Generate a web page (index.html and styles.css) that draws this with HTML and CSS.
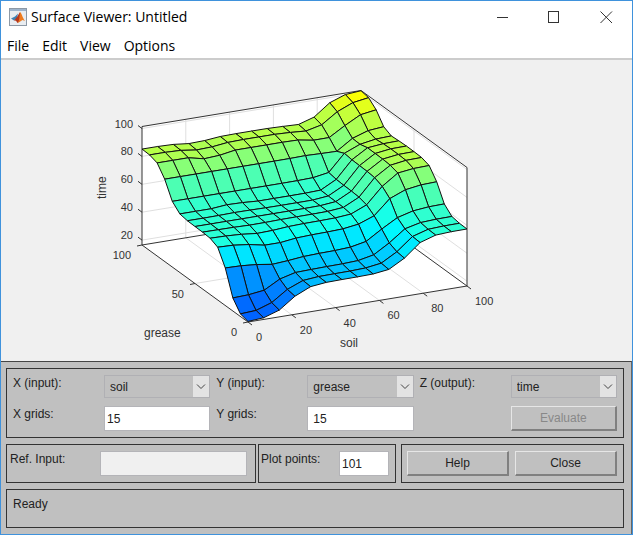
FILE: index.html
```html
<!DOCTYPE html>
<html lang="en">
  <head>
    <meta charset="UTF-8" />
    <meta name="viewport" content="width=device-width, initial-scale=1.0" />
    <title>Surface Viewer: Untitled</title>
    <link rel="stylesheet" href="styles.css">
  </head>
  <body>
    <div class="window">
      <header class="titlebar">
        <svg class="logo" width="18" height="18" viewBox="0 0 18 18">
          <rect x="0.5" y="0.5" width="17" height="17" fill="#e9edf1" stroke="#8d99a6" />
          <rect x="1" y="1" width="16" height="2" fill="#9db4cc" />
          <path d="M2 10.5 L6 8.5 L9 5.5 L8 10 L5 12.5 Z" fill="#3e82b5" />
          <path d="M5 12.5 L8 9 L11 4 L11.5 12 L8.5 15 L7 12.8 Z" fill="#b5371c" />
          <path d="M11 4 C12.5 5 13.5 9.5 16 13 L13.5 12 L9 15 C10.5 12 10.5 8 11 4 Z" fill="#ee7b1f" />
        </svg>
        <h1>Surface Viewer: Untitled</h1>
        <div class="window-buttons">
          <button type="button" aria-label="Minimize">
            <svg width="13" height="13" viewBox="0 0 13 13"><path d="M1 6.5 H12" /></svg>
          </button>
          <button type="button" aria-label="Maximize">
            <svg width="13" height="13" viewBox="0 0 13 13"><rect x="0.5" y="0.5" width="10" height="11" /></svg>
          </button>
          <button type="button" aria-label="Close window">
            <svg width="13" height="13" viewBox="0 0 13 13"><path d="M0.5 0.5 L12 12 M12 0.5 L0.5 12" /></svg>
          </button>
        </div>
      </header>

      <nav class="menubar">
        <a href="#">File</a>
        <a href="#">Edit</a>
        <a href="#">View</a>
        <a href="#">Options</a>
      </nav>

      <main class="plot">
        <svg id="surface" viewBox="1 60 631 301" role="img" aria-label="time as a function of soil and grease"></svg>
      </main>

      <form class="controls">
        <div class="panel axes">
          <label for="xInput">X (input):</label>
          <span class="dropdown">
            <select id="xInput"><option>soil</option><option>grease</option></select>
            <svg width="16" height="20" viewBox="0 0 16 20"><path d="M4 8 L8 12 L12 8" /></svg>
          </span>
          <label for="yInput">Y (input):</label>
          <span class="dropdown">
            <select id="yInput"><option>grease</option><option>soil</option></select>
            <svg width="16" height="20" viewBox="0 0 16 20"><path d="M4 8 L8 12 L12 8" /></svg>
          </span>
          <label for="zOutput">Z (output):</label>
          <span class="dropdown">
            <select id="zOutput"><option>time</option></select>
            <svg width="16" height="20" viewBox="0 0 16 20"><path d="M4 8 L8 12 L12 8" /></svg>
          </span>

          <label for="xGrids">X grids:</label>
          <input type="text" id="xGrids" value="15" />
          <label for="yGrids">Y grids:</label>
          <input type="text" id="yGrids" class="indent" value="15" />
          <button type="button" class="evaluate" disabled>Evaluate</button>
        </div>

        <div class="row">
          <div class="panel ref">
            <label for="refInput">Ref. Input:</label>
            <input type="text" id="refInput" disabled />
          </div>
          <div class="panel points">
            <label for="plotPoints">Plot points:</label>
            <input type="text" id="plotPoints" value="101" />
          </div>
          <div class="panel actions">
            <button type="button">Help</button>
            <button type="button">Close</button>
          </div>
        </div>

        <div class="panel status">Ready</div>
      </form>
    </div>
    <script src="surface.js"></script>
  </body>
</html>
```

FILE: styles.css
```css
* {
  margin: 0;
  padding: 0;
  box-sizing: border-box;
}

body {
  background: #f0f0f0;
  font-family: "Liberation Sans", Arial, sans-serif;
  font-size: 12px;
  line-height: 16px;
  color: #222;
}

.window {
  display: flex;
  flex-direction: column;
  min-height: 100vh;
  border: 1px solid #3f92dc;
}

/* Title bar */
.titlebar {
  display: flex;
  align-items: center;
  height: 32px;
  padding-left: 8px;
  background: #fff;
}

.titlebar h1 {
  flex: 1;
  margin-left: 4px;
  font-family: "Open Sans", "Noto Sans", sans-serif;
  font-size: 14px;
  font-weight: 400;
  color: #000;
}

.window-buttons {
  display: flex;
}

.window-buttons button {
  display: flex;
  align-items: center;
  justify-content: center;
  width: 52px;
  height: 32px;
  border: none;
  background: none;
}

.window-buttons svg {
  fill: none;
  stroke: #333;
}

/* Menu */
.menubar {
  display: flex;
  gap: 13px;
  height: 27px;
  padding: 5px 6px 4px;
  background: #fff;
  border-bottom: 2px solid #ccc;
}

.menubar a {
  font-family: "Open Sans", "Noto Sans", sans-serif;
  font-size: 14px;
  font-weight: 500;
  color: #000;
  text-decoration: none;
}

/* Plot */
.plot {
  flex: 1;
  background: #f0f0f0;
}

.plot svg {
  display: block;
  width: 100%;
}

.wall {
  fill: #fff;
}

.gridline {
  stroke: #dfdfdf;
  fill: none;
}

.axis {
  stroke: #333;
  fill: none;
}

.face {
  stroke: #111;
  stroke-linejoin: round;
}

.tick {
  font-size: 11px;
  fill: #333;
}

.axis-label {
  font-size: 12px;
  fill: #333;
}

/* Controls */
.controls {
  display: flex;
  flex-direction: column;
  gap: 6px;
  padding: 6px 7px 6px 5px;
  background: #c0c0c0;
  border-top: 1px solid #444;
  border-right: 1px solid #666;
}

.panel {
  border: 1px solid #333;
}

.axes {
  display: grid;
  grid-template-columns: 85px 1fr 85px 1fr 85px 1fr;
  column-gap: 6px;
  row-gap: 8px;
  padding: 6px;
}

input {
  width: 100%;
  height: 25px;
  padding: 0 2px;
  border: 1px solid #b4b4b8;
  background: #fff;
  font: inherit;
  color: #222;
}

input.indent {
  padding-left: 5px;
}

input:disabled {
  background: #f0f0f0;
}

.dropdown {
  position: relative;
}

select {
  display: block;
  width: 100%;
  height: 23px;
  padding: 0 20px 0 5px;
  border: 1px solid #b0b0b4;
  border-radius: 0;
  background: #c0c0c0;
  appearance: none;
  font: inherit;
  color: #222;
}

.dropdown svg {
  position: absolute;
  top: 1px;
  right: 1px;
  height: 21px;
  background: #e3e3e3;
  fill: none;
  stroke: #444;
  pointer-events: none;
}

.panel button {
  height: 25px;
  border: 2px solid;
  border-color: #e6e6e6 #808080 #808080 #e6e6e6;
  border-width: 1px 2px 2px 1px;
  background: #c0c0c0;
  font: inherit;
  color: #222;
}

.panel button:disabled {
  color: #888;
}

.evaluate {
  grid-column: 6;
}

.row {
  display: grid;
  grid-template-columns: 250fr 138fr 226fr;
  column-gap: 2px;
}

.ref,
.points {
  display: flex;
  padding: 6px;
}

.ref {
  padding: 6px 8px 6px 3px;
}

.ref label {
  flex: none;
  width: 90px;
}

.points {
  padding-left: 2px;
}

.points label {
  flex: none;
  width: 78px;
}

.actions {
  display: flex;
  gap: 6px;
  margin-left: 3px;
  padding: 6px 6px 6px 5px;
}

.actions button {
  flex: 1;
}

.status {
  height: 39px;
  padding: 6px;
}
```

FILE: surface.js
```js
// Inference surface: time = f(soil, grease)
const N = 14;
const svg = document.getElementById("surface");

// height in drawing units for output sets very short .. very long
const level = [0, 27, 57, 96, 119];
const area = [0.2, 0.8, 1, 0.85, 0.12];
const rules = [
  [0, 2, 3],
  [1, 2, 3],
  [2, 3, 4],
];

function member(x, center) {
  return Math.exp(-((x - center) ** 2) / 7.4);
}

function height(i, j) {
  const soil = [member(i, 0), member(i, 6.8), member(i, 14)];
  const grease = [member(j, 0), member(j, 7), member(j, 14)];
  const fire = [0, 0, 0, 0, 0];
  for (let s = 0; s < 3; s++) {
    for (let g = 0; g < 3; g++) {
      const k = rules[s][g];
      fire[k] = Math.max(fire[k], Math.min(soil[s], grease[g]));
    }
  }
  let sum = 0;
  let total = 0;
  fire.forEach((f, k) => {
    const c = k === 3 ? level[k] - 6 * (1 - f) ** 3 : level[k];
    sum += f * area[k] * c;
    total += f * area[k];
  });
  return sum / total;
}

// u = soil 0..1, v = grease 0..1, h = height above the floor
function project(u, v, h) {
  return [248 + 219 * u - 106 * v, 322 - 36 * u - 77 * v - h];
}

function add(tag, attrs, text) {
  const el = document.createElementNS("http://www.w3.org/2000/svg", tag);
  for (const key in attrs) {
    el.setAttribute(key, attrs[key]);
  }
  if (text) {
    el.textContent = text;
  }
  svg.appendChild(el);
}

function line(cls, ...points) {
  add("polyline", { class: cls, points: points.join(" ") });
}

function jet(h) {
  const t = 0.22 + 0.0035 * h;
  const channel = (c) =>
    Math.round(255 * Math.min(1, Math.max(0, 1.5 - Math.abs(4 * t - c))));
  return `rgb(${channel(3)}, ${channel(2)}, ${channel(1)})`;
}

const TOP = 118.5;

// Walls and floor
add("polygon", { class: "wall", points: [project(0, 1, 0), project(0, 1, TOP), project(1, 1, TOP), project(1, 0, TOP), project(1, 0, 0), project(0, 0, 0)].join(" ") });

// Grid lines
[0.2, 0.4, 0.6, 0.8].forEach((u) => {
  line("gridline", project(u, 0, 0), project(u, 1, 0), project(u, 1, TOP));
});
line("gridline", project(0, 0.5, 0), project(1, 0.5, 0), project(1, 0.5, TOP));
[20, 40, 60, 80, 100].forEach((z) => {
  const h = (z - 16.5) * 1.395;
  line("gridline", project(0, 1, h), project(1, 1, h), project(1, 0, h));
});

// Box edges
line("axis", project(0, 1, 0), project(1, 1, 0), project(1, 0, 0));
line("axis", project(0, 1, TOP), project(1, 1, TOP), project(1, 0, TOP), project(1, 0, 0), project(0, 0, 0), project(0, 1, 0), project(0, 1, TOP));

// Faces, far ones first
for (let j = N - 1; j >= 0; j--) {
  for (let i = N - 1; i >= 0; i--) {
    const corners = [[i, j], [i + 1, j], [i + 1, j + 1], [i, j + 1]];
    add("polygon", {
      class: "face",
      fill: jet(height(i, j)),
      points: corners.map(([a, b]) => project(a / N, b / N, height(a, b))).join(" "),
    });
  }
}

// Ticks
[0, 20, 40, 60, 80, 100].forEach((s) => {
  const [x, y] = project(s / 100, 0, 0);
  line("axis", [x, y], [x + 4, y + 3]);
  add("text", { class: "tick", x: x + 8, y: y + 19 }, String(s));
});
[0, 50, 100].forEach((g) => {
  const [x, y] = project(0, g / 100, 0);
  line("axis", [x, y], [x - 5, y + 1]);
  add("text", { class: "tick", x: x - 11, y: y + 14, "text-anchor": "end" }, String(g));
});
[20, 40, 60, 80, 100].forEach((z) => {
  const [x, y] = project(0, 1, (z - 16.5) * 1.395);
  line("axis", [x, y], [x - 4, y - 3]);
  add("text", { class: "tick", x: x - 9, y: y - 1, "text-anchor": "end" }, String(z));
});

// Axis names
add("text", { class: "axis-label", x: 340, y: 347 }, "soil");
add("text", { class: "axis-label", x: 144, y: 337 }, "grease");
add("text", { class: "axis-label", transform: "translate(106 199) rotate(-90)" }, "time");
```
